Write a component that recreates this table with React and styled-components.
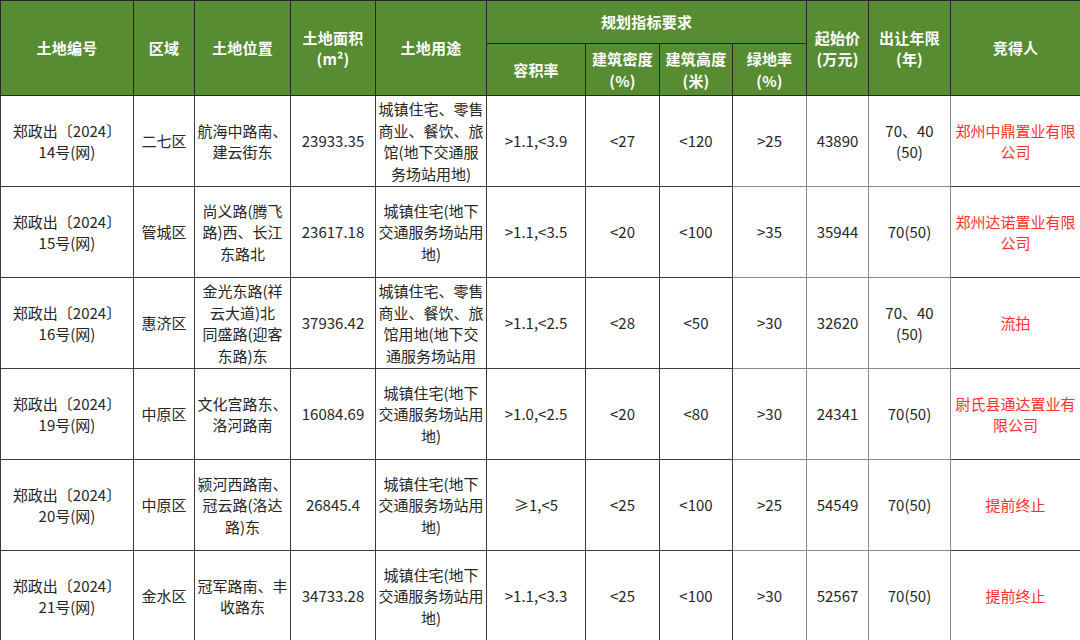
import React from 'react';
import styled, { createGlobalStyle } from 'styled-components';

const GlobalStyle = createGlobalStyle`
  html, body {
    margin: 0;
    padding: 0;
    background: #ffffff;
  }
  body {
    font-family: "Noto Sans CJK SC", "Noto Sans", sans-serif;
  }
`;

const widths = [133, 61, 96, 85, 111, 99, 74, 73, 74, 62, 82, 130];

const Table = styled.table`
  width: 1080px;
  table-layout: fixed;
  border-collapse: collapse;
  font-size: 15px;
  line-height: 21.5px;
`;

const HeadRow = styled.tr`
  height: ${(p) => p.$h}px;
`;

const HeadCell = styled.th`
  background: #588c33;
  color: #ffffff;
  font-weight: 700;
  text-align: center;
  vertical-align: middle;
  border: 1px solid #262626;
  padding: 0 2px;
  letter-spacing: 0.2px;
`;

const Cell = styled.td`
  border: 1px solid ${(p) => (p.$light ? '#8a8a8a' : '#3c3c3c')};
  padding: 0;
  height: 90px;
  color: ${(p) => (p.$red ? '#ff3030' : '#262626')};
`;

const CellBox = styled.div`
  height: 90px;
  display: flex;
  flex-direction: column;
  justify-content: center;
  align-items: center;
  text-align: center;
  overflow: hidden;
`;

const Line = styled.span`
  display: block;
  white-space: nowrap;
`;

// 土地用途 of row 16号 is cut by the cell in the source sheet: only four lines show
const rows = [
  {
    no: ['郑政出〔2024〕', '14号(网)'],
    area: ['二七区'],
    loc: ['航海中路南、', '建云街东'],
    size: ['23933.35'],
    use: ['城镇住宅、零售', '商业、餐饮、旅', '馆(地下交通服', '务场站用地)'],
    far: ['>1.1,<3.9'],
    density: ['<27'],
    height: ['<120'],
    green: ['>25'],
    price: ['43890'],
    years: ['70、40', '(50)'],
    winner: ['郑州中鼎置业有限', '公司'],
  },
  {
    no: ['郑政出〔2024〕', '15号(网)'],
    area: ['管城区'],
    loc: ['尚义路(腾飞', '路)西、长江', '东路北'],
    size: ['23617.18'],
    use: ['城镇住宅(地下', '交通服务场站用', '地)'],
    far: ['>1.1,<3.5'],
    density: ['<20'],
    height: ['<100'],
    green: ['>35'],
    price: ['35944'],
    years: ['70(50)'],
    winner: ['郑州达诺置业有限', '公司'],
  },
  {
    no: ['郑政出〔2024〕', '16号(网)'],
    area: ['惠济区'],
    loc: ['金光东路(祥', '云大道)北', '同盛路(迎客', '东路)东'],
    size: ['37936.42'],
    use: ['城镇住宅、零售', '商业、餐饮、旅', '馆用地(地下交', '通服务场站用'],
    far: ['>1.1,<2.5'],
    density: ['<28'],
    height: ['<50'],
    green: ['>30'],
    price: ['32620'],
    years: ['70、40', '(50)'],
    winner: ['流拍'],
  },
  {
    no: ['郑政出〔2024〕', '19号(网)'],
    area: ['中原区'],
    loc: ['文化宫路东、', '洛河路南'],
    size: ['16084.69'],
    use: ['城镇住宅(地下', '交通服务场站用', '地)'],
    far: ['>1.0,<2.5'],
    density: ['<20'],
    height: ['<80'],
    green: ['>30'],
    price: ['24341'],
    years: ['70(50)'],
    winner: ['尉氏县通达置业有', '限公司'],
  },
  {
    no: ['郑政出〔2024〕', '20号(网)'],
    area: ['中原区'],
    loc: ['颍河西路南、', '冠云路(洛达', '路)东'],
    size: ['26845.4'],
    use: ['城镇住宅(地下', '交通服务场站用', '地)'],
    far: ['≥1,<5'],
    density: ['<25'],
    height: ['<100'],
    green: ['>25'],
    price: ['54549'],
    years: ['70(50)'],
    winner: ['提前终止'],
  },
  {
    no: ['郑政出〔2024〕', '21号(网)'],
    area: ['金水区'],
    loc: ['冠军路南、丰', '收路东'],
    size: ['34733.28'],
    use: ['城镇住宅(地下', '交通服务场站用', '地)'],
    far: ['>1.1,<3.3'],
    density: ['<25'],
    height: ['<100'],
    green: ['>30'],
    price: ['52567'],
    years: ['70(50)'],
    winner: ['提前终止'],
  },
];

const keys = ['no', 'area', 'loc', 'size', 'use', 'far', 'density', 'height', 'green', 'price', 'years', 'winner'];
const lightCols = ['green', 'price', 'years'];

const Lines = ({ items }) => items.map((t, i) => <Line key={i}>{t}</Line>);

const App = () => {
  return (
    <>
      <GlobalStyle />
      <Table>
        <colgroup>
          {widths.map((w, i) => (
            <col key={i} style={{ width: w }} />
          ))}
        </colgroup>
        <thead>
          <HeadRow $h={43}>
            <HeadCell rowSpan={2}>土地编号</HeadCell>
            <HeadCell rowSpan={2}>区域</HeadCell>
            <HeadCell rowSpan={2}>土地位置</HeadCell>
            <HeadCell rowSpan={2}>
              土地面积
              <br />
              (m²)
            </HeadCell>
            <HeadCell rowSpan={2}>土地用途</HeadCell>
            <HeadCell colSpan={4}>规划指标要求</HeadCell>
            <HeadCell rowSpan={2}>
              起始价
              <br />
              (万元)
            </HeadCell>
            <HeadCell rowSpan={2}>
              出让年限
              <br />
              (年)
            </HeadCell>
            <HeadCell rowSpan={2}>竞得人</HeadCell>
          </HeadRow>
          <HeadRow $h={52}>
            <HeadCell>容积率</HeadCell>
            <HeadCell>
              建筑密度
              <br />
              (%)
            </HeadCell>
            <HeadCell>
              建筑高度
              <br />
              (米)
            </HeadCell>
            <HeadCell>
              绿地率
              <br />
              (%)
            </HeadCell>
          </HeadRow>
        </thead>
        <tbody>
          {rows.map((r, i) => (
            <tr key={i}>
              {keys.map((k) => (
                <Cell key={k} $red={k === 'winner'} $light={lightCols.includes(k)}>
                  <CellBox>
                    <Lines items={r[k]} />
                  </CellBox>
                </Cell>
              ))}
            </tr>
          ))}
        </tbody>
      </Table>
    </>
  );
};

export default App;
